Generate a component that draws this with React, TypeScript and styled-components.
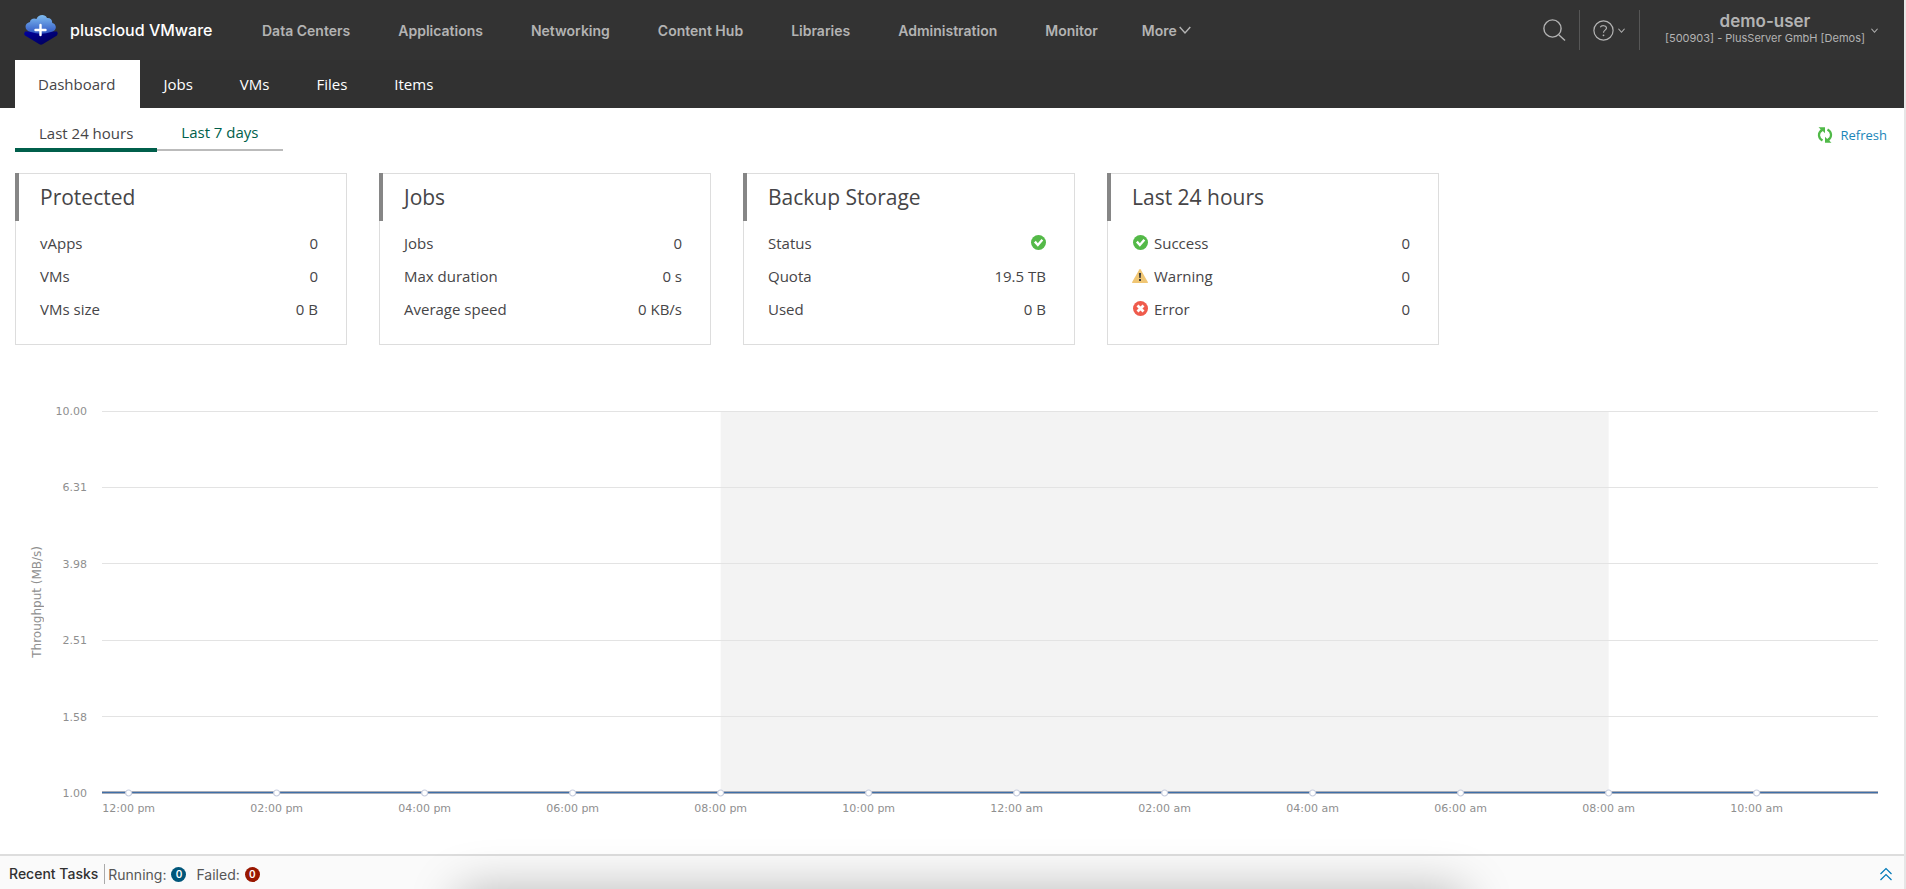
import React from "react";
import styled, { createGlobalStyle } from "styled-components";

const Global = createGlobalStyle`
  *, *::before, *::after { box-sizing: border-box; }
  body { margin: 0; background: #fff; color: #464547; font-family: "Open Sans", sans-serif; font-size: 15px; }
  button { border: 0; padding: 0; background: none; font: inherit; color: inherit; cursor: pointer; }
  a { text-decoration: none; color: inherit; }
  h2, p, ul { margin: 0; padding: 0; list-style: none; font-weight: 400; }
`;

const Page = styled.div`
  position: relative;
  display: flex;
  flex-direction: column;
  min-height: 100vh;
  border-right: 2px solid #e6e6e6;
  overflow: hidden;
`;

const Header = styled.header`
  display: flex;
  align-items: center;
  height: 60px;
  background: #333;
  color: #b3b3b3;
  font-family: Inter, sans-serif;
`;

const Brand = styled.a`
  display: flex;
  align-items: center;
  gap: 11px;
  width: 238px;
  padding-left: 23px;
  color: #fff;
  font-size: 16px;
  font-weight: 500;
  white-space: nowrap;
`;

const MainNav = styled.nav`
  display: flex;
  flex: 1;
`;

const NavLink = styled.a`
  display: flex;
  align-items: center;
  gap: 2px;
  padding: 0 24px;
  font-size: 14px;
  font-weight: 600;
  white-space: nowrap;
`;

const MoreButton = styled.button`
  display: flex;
  align-items: center;
  gap: 2px;
  padding: 0 20px;
  font-size: 14px;
  font-weight: 600;
`;

const HeaderButton = styled.button<{ $width: number }>`
  display: flex;
  align-items: center;
  justify-content: center;
  gap: 4px;
  width: ${(p) => p.$width}px;
  height: 40px;
  border-right: 1px solid #565656;
`;

const UserButton = styled.button`
  display: flex;
  align-items: center;
  gap: 6px;
  padding: 0 26px 0 25px;
`;

const UserText = styled.span`
  display: flex;
  flex-direction: column;
  align-items: center;
  padding-bottom: 3px;
  font-size: 11px;
  line-height: 14px;
  white-space: nowrap;
`;

const UserName = styled.strong`
  font-size: 17px;
  font-weight: 600;
  line-height: 19px;
`;

const SubNav = styled.nav`
  display: flex;
  height: 48px;
  padding-left: 15px;
  background: #313131;
`;

const SubTab = styled.a<{ $active?: boolean }>`
  display: flex;
  align-items: center;
  padding: ${(p) => (p.$active ? "0 25px 0 23px" : "0 24px 0 23px")};
  background: ${(p) => (p.$active ? "#fff" : "transparent")};
  color: ${(p) => (p.$active ? "#464547" : "#fff")};
`;

const Toolbar = styled.div`
  display: flex;
  align-items: flex-start;
  justify-content: space-between;
  height: 65px;
  padding: 8px 17px 0 15px;
`;

const Periods = styled.div`
  display: flex;
  align-items: flex-start;
`;

const Period = styled.button<{ $active?: boolean }>`
  height: ${(p) => (p.$active ? 36 : 35)}px;
  padding: ${(p) => (p.$active ? "2px 24px 0" : "0 24px 2px")};
  border-bottom: ${(p) => (p.$active ? "4px solid #005f4b" : "2px solid #bbb")};
  color: ${(p) => (p.$active ? "#464547" : "#005f4b")};
`;

const Refresh = styled.button`
  display: flex;
  align-items: center;
  gap: 8px;
  height: 38px;
  color: #1a85b9;
  font-size: 13px;
`;

const Cards = styled.div`
  display: flex;
  flex-wrap: wrap;
  gap: 32px;
  padding: 0 15px;
`;

const Card = styled.section`
  position: relative;
  width: 332px;
  height: 172px;
  padding: 0 28px 0 24px;
  border: 1px solid #ddd;

  &::before {
    content: "";
    position: absolute;
    left: -1px;
    top: -1px;
    width: 4px;
    height: 48px;
    background: #868686;
  }
`;

const CardTitle = styled.h2`
  margin-bottom: 6px;
  font-size: 21px;
  line-height: 46px;
`;

const Row = styled.li`
  display: flex;
  align-items: center;
  justify-content: space-between;
  height: 33px;
`;

const RowLabel = styled.span`
  display: flex;
  align-items: center;
  gap: 6px;
`;

const ChartArea = styled.figure`
  display: flex;
  flex: 1;
  min-height: 300px;
  margin: 66px 26px 61px 0;
`;

const AxisTitle = styled.div`
  display: flex;
  align-items: center;
  justify-content: center;
  width: 74px;
  color: #8f8f8f;
  font-family: "DejaVu Sans", sans-serif;
  font-size: 12px;

  span {
    writing-mode: vertical-rl;
    transform: rotate(180deg);
  }
`;

const Plot = styled.div`
  display: flex;
  flex: 1;
  padding-left: 28px;
`;

const ChartSvg = styled.svg`
  display: block;
  flex: 1;
  width: 100%;
  overflow: visible;
  font-family: "DejaVu Sans", sans-serif;
  font-size: 11px;
  fill: #8f8f8f;
`;

const TaskBar = styled.footer`
  position: relative;
  display: flex;
  align-items: center;
  height: 35px;
  padding: 3px 11px 0 9px;
  border-top: 2px solid #ddd;
  background: #fafafa;
  color: #565656;
  font-family: Inter, sans-serif;
  font-size: 14px;
`;

const TaskTitle = styled.span`
  margin-right: 3px;
  padding-right: 6px;
  border-right: 1px solid #aaa;
  color: #313131;
  font-weight: 500;
  line-height: 20px;
`;

const TaskCount = styled.span`
  display: flex;
  align-items: center;
  gap: 5px;
  margin-right: 10px;
`;

const Badge = styled.span<{ $color: string }>`
  display: flex;
  align-items: center;
  justify-content: center;
  width: 15px;
  height: 15px;
  border-radius: 50%;
  background: ${(p) => p.$color};
  color: #fff;
  font-size: 10px;
  font-weight: 600;
`;

const Expand = styled.button`
  display: flex;
  margin-left: auto;
`;

const DockShadow = styled.div`
  position: absolute;
  left: 24%;
  right: 23%;
  bottom: -60px;
  height: 60px;
  border-radius: 16px;
  box-shadow: 0 0 48px rgba(0, 0, 0, 0.26);
  pointer-events: none;
`;

const Logo = () => (
  <svg width="36" height="32" viewBox="0 0 36 32" aria-hidden="true">
    <defs>
      <linearGradient id="cloud" x1="0" y1="0" x2="0" y2="1">
        <stop offset="0" stopColor="#7fbcf0" />
        <stop offset="1" stopColor="#2f55c4" />
      </linearGradient>
      <linearGradient id="base" x1="0" y1="0" x2="1" y2="1">
        <stop offset="0" stopColor="#0000a0" />
        <stop offset="1" stopColor="#00004e" />
      </linearGradient>
    </defs>
    <path d="M2 17.500h32q1.500 1.500 0 4L20 30q-2 1.500-4 0L2 21.500q-1.500-2 0-4Z" fill="url(#base)" />
    <path d="M8 18C1 17 .8 9 7 8c0-3 4-4.500 6.500-3C15 .5 22-.5 24 4c3.500-.3 5.500 2 5.200 5C34 10 34.500 17 28 18q-10 3.500-20 0Z" fill="url(#cloud)" />
    <path d="M17.500 11v10M12.500 16h10" stroke="#fff" strokeWidth="2.400" strokeLinecap="round" />
  </svg>
);

const Chevron = ({ size = 7 }: { size?: number }) => (
  <svg width={size} height={size} viewBox="0 0 10 10" fill="none" stroke="currentColor" strokeWidth={size > 8 ? 1.2 : 1.5} aria-hidden="true">
    <path d="M.6 2.500 5 7.500l4.400-5" />
  </svg>
);

const SearchIcon = () => (
  <svg width="24" height="24" viewBox="0 0 24 24" fill="none" stroke="currentColor" strokeWidth="1.400" aria-hidden="true">
    <circle cx="10.500" cy="10.500" r="8.600" />
    <path d="m17 17 6 5.500" />
  </svg>
);

const HelpIcon = () => (
  <svg width="21" height="21" viewBox="0 0 21 21" fill="none" stroke="currentColor" strokeWidth="1.200" aria-hidden="true">
    <circle cx="10.500" cy="10.500" r="9.600" />
    <path d="M7.300 7.200c1-2 6-2.200 6.200.8 0 2.200-3 2.100-3 4.700" />
    <circle cx="10.500" cy="15.300" r=".9" fill="currentColor" stroke="none" />
  </svg>
);

const RefreshIcon = () => (
  <svg width="16" height="16" viewBox="0 0 16 16" fill="none" stroke="#50b948" strokeWidth="2.200" aria-hidden="true">
    <path d="M5.500 13.500C1 11 .8 6 4.800 3M10.500 2.500c4.500 2.500 4.700 7.500.7 10.500" />
    <path d="M1.500.3H8v6L5.800 4 4 5.200 3.600 2.300ZM14.500 15.700H8v-6L10.200 12l1.800-1.200.4 2.900Z" stroke="none" fill="#50b948" />
  </svg>
);

type StatusKind = "success" | "warning" | "error";

const StatusIcon = ({ kind }: { kind: StatusKind }) => {
  if (kind === "warning") {
    return (
      <svg width="16" height="14" viewBox="0 0 16 14" role="img" aria-label="Warning">
        <path d="M7.300.6q.7-1 1.400 0L15.800 13q.4 1-.6 1H.8q-1 0-.6-1Z" fill="#f0c674" />
        <path d="M6.900 4h2.200l-.4 5H7.300ZM7 10h2v2H7Z" fill="#3c3c3c" />
      </svg>
    );
  }
  return (
    <svg width="15" height="15" viewBox="0 0 14 14" fill="none" stroke="#fff" role="img" aria-label={kind}>
      <circle cx="7" cy="7" r="7" stroke="none" fill={kind === "success" ? "#54b948" : "#ef5b4c"} />
      {kind === "success" ? (
        <path d="m3.600 6.200 2.800 3.200 4.200-4.900" strokeWidth="2.200" />
      ) : (
        <path d="m4.200 4.200 5.600 5.600M9.800 4.200 4.200 9.800" strokeWidth="2.600" />
      )}
    </svg>
  );
};

const IconSlot = styled.span`
  display: flex;
  justify-content: center;
  width: 16px;
`;

const navItems = ["Data Centers", "Applications", "Networking", "Content Hub", "Libraries", "Administration", "Monitor"];
const subItems = ["Dashboard", "Jobs", "VMs", "Files", "Items"];

type CardRow = { label: string; value?: string; icon?: StatusKind; status?: StatusKind };

const cards: { title: string; rows: CardRow[] }[] = [
  { title: "Protected", rows: [{ label: "vApps", value: "0" }, { label: "VMs", value: "0" }, { label: "VMs size", value: "0 B" }] },
  { title: "Jobs", rows: [{ label: "Jobs", value: "0" }, { label: "Max duration", value: "0 s" }, { label: "Average speed", value: "0 KB/s" }] },
  { title: "Backup Storage", rows: [{ label: "Status", status: "success" }, { label: "Quota", value: "19.5 TB" }, { label: "Used", value: "0 B" }] },
  {
    title: "Last 24 hours",
    rows: [
      { label: "Success", value: "0", icon: "success" },
      { label: "Warning", value: "0", icon: "warning" },
      { label: "Error", value: "0", icon: "error" },
    ],
  },
];

const yLabels = ["10.00", "6.31", "3.98", "2.51", "1.58", "1.00"];
const xLabels = [
  "12:00 pm", "02:00 pm", "04:00 pm", "06:00 pm", "08:00 pm", "10:00 pm",
  "12:00 am", "02:00 am", "04:00 am", "06:00 am", "08:00 am", "10:00 am",
];
const tickX = (i: number) => `${1.5 + (i * 100) / 12}%`;

const ThroughputChart = () => (
  <ChartArea aria-label="Throughput">
    <AxisTitle><span>Throughput (MB/s)</span></AxisTitle>
    <Plot>
      <ChartSvg height="100%">
        <rect x={tickX(4)} y="0" width="50%" height="100%" fill="#f3f3f3" />
        {yLabels.map((label, i) => (
          <g key={label}>
            {i < 5 && <line x1="0" x2="100%" y1={`${i * 20}%`} y2={`${i * 20}%`} stroke="#e3e3e3" shapeRendering="crispEdges" />}
            <text x="-15" y={`${i * 20}%`} dy="4" textAnchor="end">{label}</text>
          </g>
        ))}
        <svg y="100%" overflow="visible">
          <rect y="-2" width="100%" height="3" fill="#a9adb8" />
          <rect y="-1" width="100%" height="1" fill="#3f6fa8" />
        </svg>
        {xLabels.map((label, i) => (
          <svg key={label} x={tickX(i)} y="100%" overflow="visible">
            <circle r="3" fill="#fff" stroke="#c8cedf" strokeWidth="1.200" />
            <text y="19" textAnchor="middle">{label}</text>
          </svg>
        ))}
      </ChartSvg>
    </Plot>
  </ChartArea>
);

export default function App() {
  return (
    <Page>
      <Global />
      <Header>
        <Brand href="#"><Logo />pluscloud VMware</Brand>
        <MainNav>
          {navItems.map((item) => <NavLink key={item} href="#">{item}</NavLink>)}
          <MoreButton>More<Chevron size={12} /></MoreButton>
        </MainNav>
        <HeaderButton $width={50} aria-label="Search"><SearchIcon /></HeaderButton>
        <HeaderButton $width={60} aria-label="Help"><HelpIcon /><Chevron /></HeaderButton>
        <UserButton>
          <UserText>
            <UserName>demo-user</UserName>
            [500903] - PlusServer GmbH [Demos]
          </UserText>
          <Chevron />
        </UserButton>
      </Header>
      <SubNav>
        {subItems.map((item, i) => <SubTab key={item} href="#" $active={i === 0}>{item}</SubTab>)}
      </SubNav>
      <Toolbar>
        <Periods>
          <Period $active>Last 24 hours</Period>
          <Period>Last 7 days</Period>
        </Periods>
        <Refresh><RefreshIcon />Refresh</Refresh>
      </Toolbar>
      <Cards>
        {cards.map((card) => (
          <Card key={card.title}>
            <CardTitle>{card.title}</CardTitle>
            <ul>
              {card.rows.map((row) => (
                <Row key={row.label}>
                  <RowLabel>
                    {row.icon && <IconSlot><StatusIcon kind={row.icon} /></IconSlot>}
                    {row.label}
                  </RowLabel>
                  {row.status ? <StatusIcon kind={row.status} /> : <span>{row.value}</span>}
                </Row>
              ))}
            </ul>
          </Card>
        ))}
      </Cards>
      <ThroughputChart />
      <TaskBar>
        <TaskTitle>Recent Tasks</TaskTitle>
        <TaskCount>Running:<Badge $color="#00567a">0</Badge></TaskCount>
        <TaskCount>Failed:<Badge $color="#991700">0</Badge></TaskCount>
        <Expand aria-label="Expand recent tasks">
          <svg width="14" height="14" viewBox="0 0 14 14" fill="none" stroke="#0079b8" strokeWidth="1.200">
            <path d="m1.500 7 5.500-5.500L12.500 7M1.500 13 7 7.500l5.500 5.500" />
          </svg>
        </Expand>
      </TaskBar>
      <DockShadow />
    </Page>
  );
}
